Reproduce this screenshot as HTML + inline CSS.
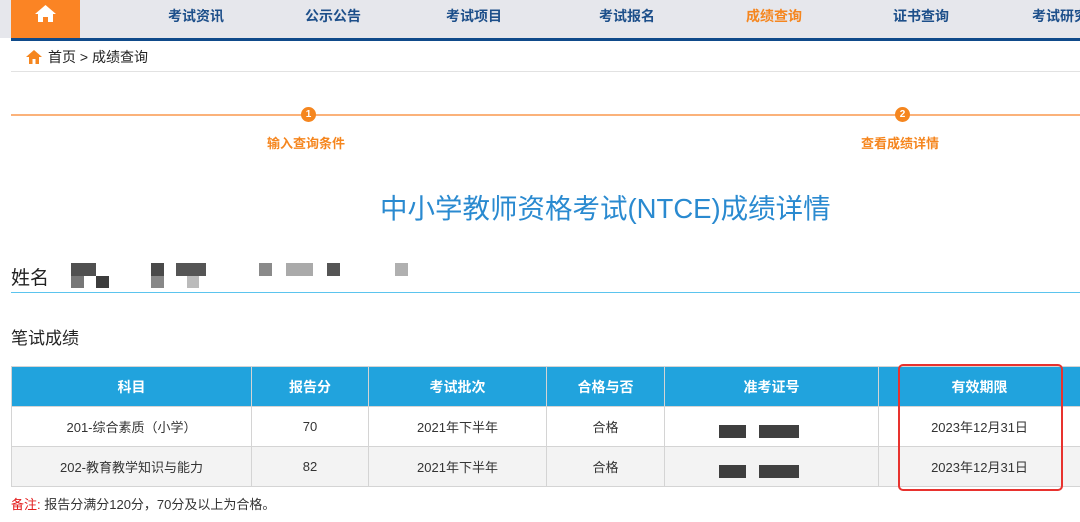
<!DOCTYPE html>
<html><head><meta charset="utf-8"><style>
*{margin:0;padding:0;box-sizing:border-box}
body{width:1080px;height:522px;overflow:hidden;background:#fff;font-family:"Liberation Sans","Noto Sans CJK SC",sans-serif;position:relative}
.a{position:absolute;white-space:nowrap}
.nav{left:0;top:0;width:1080px;height:38px;background:#e6e7ec}
.navb{left:11px;top:38px;width:1069px;height:3px;background:#0f4a8a}
.home{left:11px;top:0;width:69px;height:38px;background:#fb8424}
.ni{top:6px;font-size:14px;font-weight:bold;color:#1d4f8a;font-family:"Noto Sans CJK SC",sans-serif}
table{position:absolute;left:11px;top:366px;border-collapse:collapse;font-size:13px;color:#333;table-layout:fixed;width:1069px}
td,th{border:1px solid #d4d4d4;text-align:center;height:40px}
th{background:#21a3dd;color:#fff;font-weight:bold;font-size:14px}
tr.g td{background:#f3f3f3}
.blk{position:absolute;background:#444}
</style></head><body>
<div class="a nav"></div>
<div class="a home"><svg width="69" height="38" viewBox="0 0 69 38"><path d="M24 14 L34.5 5 L45 14 L42 14 L42 22 L37 22 L37 17 L32 17 L32 22 L27 22 L27 14 Z" fill="#fff"/></svg></div>
<div class="a navb"></div>
<div class="a ni" style="left:168px">考试资讯</div>
<div class="a ni" style="left:305px">公示公告</div>
<div class="a ni" style="left:446px">考试项目</div>
<div class="a ni" style="left:599px">考试报名</div>
<div class="a ni" style="left:746px;color:#f5861f">成绩查询</div>
<div class="a ni" style="left:893px">证书查询</div>
<div class="a ni" style="left:1032px">考试研究</div>
<svg class="a" style="left:25px;top:49px" width="18" height="16" viewBox="0 0 18 16"><path d="M1 8 L9 1 L17 8 L14 8 L14 15 L4 15 L4 8 Z" fill="#f5861f"/><rect x="7.5" y="10" width="3" height="5" fill="#fff"/></svg>
<div class="a" style="left:48px;top:47px;font-size:14px;color:#222">首页 &gt; 成绩查询</div>
<div class="a" style="left:11px;top:71px;width:1069px;height:1px;background:#e2e2e2"></div>
<div class="a" style="left:11px;top:114px;width:1069px;height:2px;background:#fbb27a"></div>
<div class="a" style="left:301px;top:107px;width:15px;height:15px;border-radius:50%;background:#f5861f;color:#fff;font-size:10px;font-weight:bold;text-align:center;line-height:15px">1</div>
<div class="a" style="left:895px;top:107px;width:15px;height:15px;border-radius:50%;background:#f5861f;color:#fff;font-size:10px;font-weight:bold;text-align:center;line-height:15px">2</div>
<div class="a" style="left:267px;top:133px;font-size:13px;font-weight:bold;color:#f5861f">输入查询条件</div>
<div class="a" style="left:861px;top:133px;font-size:13px;font-weight:bold;color:#f5861f">查看成绩详情</div>
<div class="a" style="left:380px;top:186px;font-size:27.5px;color:#2a8ad0">中小学教师资格考试(NTCE)成绩详情</div>
<div class="a" style="left:11px;top:263px;font-size:19px;color:#222">姓名</div>
<div class="blk" style="left:71px;top:263px;width:25px;height:13px;background:#505050"></div>
<div class="blk" style="left:71px;top:276px;width:13px;height:12px;background:#777"></div>
<div class="blk" style="left:96px;top:276px;width:13px;height:12px;background:#3c3c3c"></div>
<div class="blk" style="left:151px;top:263px;width:13px;height:13px;background:#4a4a4a"></div>
<div class="blk" style="left:151px;top:276px;width:13px;height:12px;background:#888"></div>
<div class="blk" style="left:176px;top:263px;width:30px;height:13px;background:#555"></div>
<div class="blk" style="left:187px;top:276px;width:12px;height:12px;background:#bbb"></div>
<div class="blk" style="left:259px;top:263px;width:13px;height:13px;background:#8a8a8a"></div>
<div class="blk" style="left:286px;top:263px;width:27px;height:13px;background:#aaa"></div>
<div class="blk" style="left:327px;top:263px;width:13px;height:13px;background:#555"></div>
<div class="blk" style="left:395px;top:263px;width:13px;height:13px;background:#b0b0b0"></div>
<div class="a" style="left:11px;top:292px;width:1069px;height:1px;background:#5bc4ee"></div>
<div class="a" style="left:11px;top:324px;font-size:17px;color:#222">笔试成绩</div>
<table>
<colgroup><col style="width:240px"><col style="width:117px"><col style="width:178px"><col style="width:118px"><col style="width:214px"><col style="width:202px"></colgroup>
<tr><th>科目</th><th>报告分</th><th>考试批次</th><th>合格与否</th><th>准考证号</th><th>有效期限</th></tr>
<tr><td>201-综合素质（小学）</td><td>70</td><td>2021年下半年</td><td>合格</td><td></td><td>2023年12月31日</td></tr>
<tr class="g"><td>202-教育教学知识与能力</td><td>82</td><td>2021年下半年</td><td>合格</td><td></td><td>2023年12月31日</td></tr>
</table>
<div class="blk" style="left:719px;top:425px;width:27px;height:13px;background:#3e3e3e"></div>
<div class="blk" style="left:759px;top:425px;width:40px;height:13px;background:#404040"></div>
<div class="blk" style="left:719px;top:465px;width:27px;height:13px;background:#3e3e3e"></div>
<div class="blk" style="left:759px;top:465px;width:40px;height:13px;background:#404040"></div>
<div class="a" style="left:898px;top:364px;width:165px;height:127px;border:2px solid #e8322e;border-radius:5px"></div>
<div class="a" style="left:11px;top:494px;font-size:13px;color:#333"><span style="color:#e31d1d">备注:</span> 报告分满分120分，70分及以上为合格。</div>
</body></html>
